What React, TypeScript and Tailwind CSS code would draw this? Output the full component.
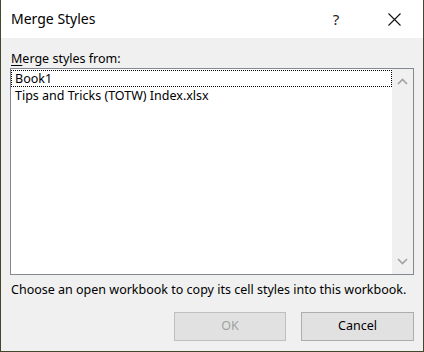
import React from "react";

const font = { fontFamily: '"Segoe UI", "Noto Sans", "Open Sans", sans-serif' };

function Chevron({ up }: { up?: boolean }) {
  return (
    <svg width="11" height="7" viewBox="0 0 11 7" className="text-[#a3a3a3]">
      <path
        d={up ? "M1 6 L5.5 1.5 L10 6" : "M1 1 L5.5 5.5 L10 1"}
        fill="none"
        stroke="currentColor"
        strokeWidth="1.6"
      />
    </svg>
  );
}

export default function App() {
  const items = ["Book1", "Tips and Tricks (TOTW) Index.xlsx"];

  return (
    <div
      className="w-[424px] h-[352px] flex flex-col border-x border-b border-[#45472c] bg-[#f0f0f0] text-black overflow-hidden"
      style={font}
    >
      {/* Title bar */}
      <div className="h-[38px] bg-white flex items-center pl-[10px] pr-[6px] shrink-0">
        <span className="text-[14px] leading-none">Merge Styles</span>
        <div className="ml-auto flex items-center h-full">
          <div className="w-[46px] h-full flex items-center justify-center mr-[12px] text-[15px] text-[#222]">?</div>
          <div className="w-[46px] h-full flex items-center justify-center">
            <svg width="13" height="13" viewBox="0 0 13 13">
              <path d="M0.5 0.5 L12.5 12.5 M12.5 0.5 L0.5 12.5" stroke="#111" strokeWidth="1.1" />
            </svg>
          </div>
        </div>
      </div>

      {/* Body */}
      <div className="flex-1 flex flex-col px-[9px]">
        <div className="h-[30px] flex items-end pb-[3px] pl-[1px] text-[12.5px] leading-none whitespace-nowrap">
          <span>
            <span className="underline underline-offset-2">M</span>erge styles from:
          </span>
        </div>

        <div className="h-[207px] border border-[#828790] bg-white flex">
          <div className="flex-1 flex flex-col pt-[1px]">
            {items.map((item, i) => (
              <div
                key={item}
                className={
                  "h-[17px] flex items-center pl-[3px] text-[12.5px] leading-[15px] whitespace-nowrap " +
                  (i === 0 ? "border border-dotted border-black" : "border border-transparent")
                }
              >
                {item}
              </div>
            ))}
          </div>
          <div className="w-[21px] bg-[#f0f0f0] flex flex-col items-center justify-between py-[9px]">
            <Chevron up />
            <Chevron />
          </div>
        </div>

        <div className="h-[30px] flex items-center pl-[1px] text-[12.5px] leading-none whitespace-nowrap">
          Choose an open workbook to copy its cell styles into this workbook.
        </div>

        <div className="flex justify-end gap-[15px] pt-[7px]">
          <button className="w-[112px] h-[29px] bg-[#e1e1e1] border border-[#bfbfbf] text-[12.5px] text-[#a0a0a0]">
            OK
          </button>
          <button className="w-[113px] h-[29px] bg-[#e1e1e1] border border-[#adadad] text-[12.5px] text-black">
            Cancel
          </button>
        </div>
      </div>
    </div>
  );
}
